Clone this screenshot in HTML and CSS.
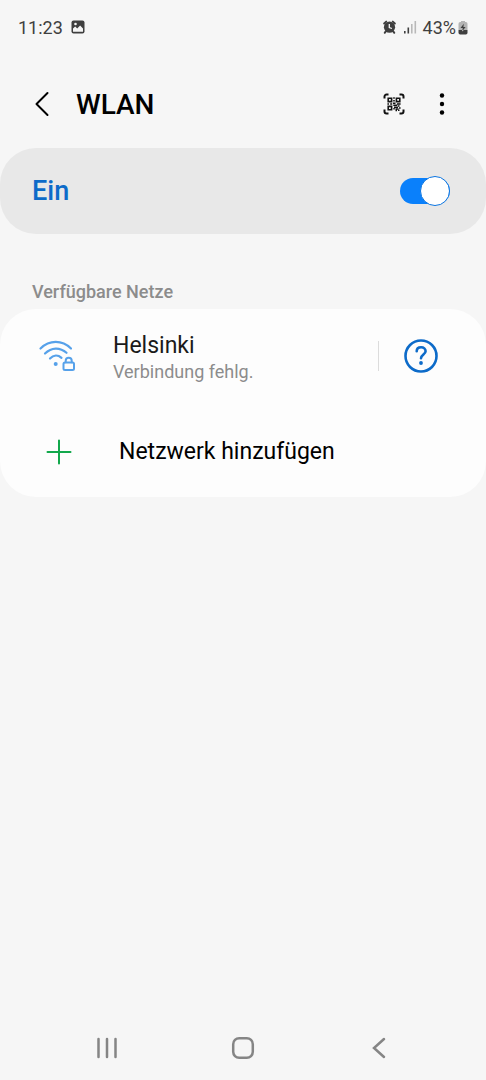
FILE: index.html
```html
<!DOCTYPE html>
<html lang="de">

<head>
    <meta charset="UTF-8">
    <meta name="viewport" content="width=device-width, initial-scale=1.0">
    <title>WLAN</title>
    <link rel="stylesheet" href="styles.css">
</head>

<body>

    <div class="status-bar">
        <div class="status-left">
            <span>11:23</span>
            <svg class="status-picture" width="14" height="14" viewBox="0 0 14 14">
                <rect x="0.5" y="0.5" width="13" height="13" rx="2" fill="#3f3f3f" />
                <path d="M2 11.7V8.6l2.2-2 2 1.8 2.9-3 2.9 3.2v3.1z" fill="#f6f6f6" />
                <circle cx="4.5" cy="4" r="1.3" fill="#f6f6f6" />
            </svg>
        </div>
        <div class="status-right">
            <svg width="13" height="14" viewBox="0 0 13 14">
                <circle cx="6.5" cy="7.2" r="5.6" fill="#3f3f3f" />
                <path d="M1.2 3.5l2-1.9M11.8 3.5l-2-1.9M2.6 11.6l-.8 1.2M10.4 11.6l.8 1.2" fill="none" stroke="#3f3f3f" stroke-width="2" stroke-linecap="round" />
                <path d="M6.3 4v3.5l2.6 1" fill="none" stroke="#f6f6f6" stroke-width="1.3" />
            </svg>
            <svg class="status-signal" width="13" height="14" viewBox="0 0 13 14">
                <rect x="0" y="11" width="1.6" height="2.5" fill="#3f3f3f" />
                <rect x="3.5" y="7.5" width="1.6" height="6" fill="#3f3f3f" />
                <rect x="7" y="4" width="1.6" height="9.5" fill="#b9b9b9" />
                <rect x="10.5" y="1" width="1.6" height="12.5" fill="#b9b9b9" />
            </svg>
            <span>43%</span>
            <svg class="status-battery" width="10" height="15" viewBox="0 0 10 15">
                <path d="M3 1h4v1h.8a1.7 1.7 0 0 1 1.7 1.7V10h-9V3.7A1.7 1.7 0 0 1 2.200 2H3z" fill="#b4b4b4" />
                <path d="M.5 10h9v2.800a1.700 1.700 0 0 1-1.700 1.700H2.200a1.700 1.700 0 0 1-1.700-1.700z" fill="#3f3f3f" />
                <path d="M5.800 3.800L2.500 8h2.300l-.6 3.200L7.600 7H5.400z" fill="#3f3f3f" />
                <path d="M4.400 10h1.200l-1.300 1.500z" fill="#f6f6f6" />
            </svg>
        </div>
    </div>

    <header class="app-bar">
        <button class="icon-button" aria-label="Zurück">
            <svg width="24" height="28" viewBox="0 0 24 28">
                <path d="M17.5 3L6.500 14l11 11" fill="none" stroke="#000" stroke-width="2" stroke-linecap="round" stroke-linejoin="round" />
            </svg>
        </button>
        <h1>WLAN</h1>
        <button class="icon-button" aria-label="QR-Code scannen">
            <svg width="22" height="22" viewBox="0 0 22 22" fill="none" stroke="#111">
                <path d="M1.500 5.500V3.500a2 2 0 0 1 2-2h2M16.500 1.500h2a2 2 0 0 1 2 2v2M20.500 16.500v2a2 2 0 0 1-2 2h-2M5.500 20.500h-2a2 2 0 0 1-2-2v-2" stroke-width="2" />
                <path d="M5.200 5.200h3.400v3.400H5.200zM13.400 5.200h3.400v3.400h-3.400zM5.200 13.400h3.400v3.400H5.200z" stroke-width="1.600" />
                <path d="M10.200 5h1.600M10.200 7.800h1.600M4.400 11h1.600M7.200 11h2M10 10.300h2.500M14 11h3.600M10.300 12.300h4M15 13h1.500M11 14.200h4M16 15h1.600M10.300 15.800h1.500M12.500 16h3M12.500 17.500h1.500M15 17.300h1.500" stroke-width="1.600" />
            </svg>
        </button>
        <button class="icon-button" aria-label="Weitere Optionen">
            <svg width="6" height="22" viewBox="0 0 6 22" fill="#000">
                <circle cx="3" cy="2.500" r="2.200" />
                <circle cx="3" cy="11" r="2.200" />
                <circle cx="3" cy="19.500" r="2.200" />
            </svg>
        </button>
    </header>

    <main>
        <label class="wifi-switch">
            <span>Ein</span>
            <input type="checkbox" role="switch" checked>
        </label>

        <h2>Verfügbare Netze</h2>

        <div class="card">
            <div class="network">
                <button class="row">
                    <svg width="40" height="34" viewBox="0 0 40 34" fill="none" stroke="#56a1ea" stroke-width="2.200" stroke-linecap="round">
                        <path d="M2.500 9.500C11.500 .7 24 .7 33 9.500" />
                        <path d="M7 14.500C13.500 8 22 8 28.500 13.800" />
                        <path d="M12 19.500C15.500 15.800 20 15.800 23.500 18.800" />
                        <circle cx="17.700" cy="25" r="2" fill="#56a1ea" stroke="none" />
                        <rect x="25.500" y="23.500" width="10.500" height="7.500" rx="1.500" stroke-width="2" />
                        <path d="M27.700 23.300v-1.500a3 3 0 0 1 6 0v1.500" stroke-width="2" />
                    </svg>
                    <span class="network-text">
                        <span class="network-name">Helsinki</span>
                        <span class="network-state">Verbindung fehlg.</span>
                    </span>
                </button>
                <button class="help" aria-label="Hilfe">
                    <svg width="34" height="34" viewBox="0 0 34 34" fill="none" stroke="#0d6bc9" stroke-linecap="round">
                        <circle cx="17" cy="17" r="15.500" stroke-width="2.600" />
                        <path d="M12.700 12.300C12.700 9.800 14.500 8.300 17.100 8.300S21.600 10 21.600 12.200C21.600 15.300 17 15.700 17 19.300" stroke-width="2.600" />
                        <circle cx="17" cy="24" r="1.900" fill="#0d6bc9" stroke="none" />
                    </svg>
                </button>
            </div>
            <button class="row add-network">
                <svg width="26" height="26" viewBox="0 0 26 26">
                    <path d="M13 1.500v23M1.500 13h23" stroke="#12a84c" stroke-width="2" stroke-linecap="round" />
                </svg>
                <span>Netzwerk hinzufügen</span>
            </button>
        </div>
    </main>

    <nav class="nav-bar">
        <button aria-label="Letzte Apps">
            <svg width="22" height="22" viewBox="0 0 22 22">
                <path d="M2.500 2v18M11 2v18M19.500 2v18" stroke="#858585" stroke-width="2.500" stroke-linecap="round" />
            </svg>
        </button>
        <button aria-label="Startbildschirm">
            <svg width="24" height="24" viewBox="0 0 24 24">
                <rect x="2.200" y="2.200" width="19.600" height="19.600" rx="6" fill="none" stroke="#858585" stroke-width="2.500" />
            </svg>
        </button>
        <button aria-label="Zurück">
            <svg width="22" height="22" viewBox="0 0 22 22">
                <path d="M16 2L6 11l10 9" fill="none" stroke="#858585" stroke-width="2.500" stroke-linecap="round" />
            </svg>
        </button>
    </nav>

</body>

</html>
```
FILE: styles.css
```css
*,
*::before,
*::after {
    box-sizing: border-box;
}

body {
    margin: 0;
    min-height: 100vh;
    display: flex;
    flex-direction: column;
    background-color: #f6f6f6;
    color: #000;
    font-family: Roboto, sans-serif;
}

svg {
    display: block;
    flex: none;
}

button {
    margin: 0;
    padding: 0;
    border: none;
    background: none;
    color: inherit;
    font: inherit;
    cursor: pointer;
}

.status-bar {
    display: flex;
    justify-content: space-between;
    align-items: center;
    height: 54px;
    padding: 0 18px;
    font-size: 18px;
    color: #3f3f3f;
}

.status-left,
.status-right {
    display: flex;
    align-items: center;
}

.status-picture {
    margin-left: 8px;
}

.status-signal {
    margin: 0 6px 0 8px;
}

.status-battery {
    margin-left: 2px;
}

.app-bar {
    display: flex;
    align-items: center;
    height: 94px;
    padding: 6px 24px 0 22px;
}

.app-bar h1 {
    flex: 1;
    margin: 0 0 0 14px;
    font-size: 28px;
    font-weight: 500;
}

.icon-button {
    display: flex;
    justify-content: center;
    align-items: center;
    width: 40px;
    height: 40px;
}

.icon-button + .icon-button {
    margin-left: 8px;
}

main {
    flex: 1;
}

.wifi-switch {
    display: flex;
    justify-content: space-between;
    align-items: center;
    height: 86px;
    padding: 0 36px 0 32px;
    border-radius: 36px;
    background-color: #e8e8e8;
    color: #0d6bc9;
    font-size: 27px;
    line-height: 30px;
    font-weight: 500;
    cursor: pointer;
}

.wifi-switch input {
    appearance: none;
    display: flex;
    justify-content: flex-end;
    align-items: center;
    width: 50px;
    height: 26px;
    margin: 0;
    border-radius: 13px;
    background-color: #0a80fb;
    cursor: pointer;
}

.wifi-switch input::before {
    content: "";
    flex: none;
    width: 30px;
    height: 30px;
    border: 1px solid #0a74e0;
    border-radius: 50%;
    background-color: #fff;
}

h2 {
    margin: 47px 32px 7px;
    font-size: 18px;
    line-height: 21px;
    font-weight: 500;
    color: #8c8c8c;
}

.card {
    border-radius: 36px;
    background-color: #fdfdfd;
}

.network {
    display: flex;
    align-items: center;
}

.row {
    flex: 1;
    display: flex;
    align-items: center;
    height: 94px;
    padding-left: 38px;
    text-align: left;
}

.network-text {
    display: flex;
    flex-direction: column;
    margin-left: 35px;
    padding-top: 4px;
}

.network-name {
    font-size: 23px;
    line-height: 28px;
    color: #1a1a1a;
}

.network-state {
    font-size: 18px;
    line-height: 24px;
    color: #8c8c8c;
}

.help {
    padding: 0 48px 0 25px;
    border-left: 1px solid #dcdcdc;
}

.help svg {
    margin: -2px 0;
}

.add-network {
    width: 100%;
    padding: 3px 0 0 46px;
    font-size: 23px;
}

.add-network span {
    margin-left: 47px;
}

.nav-bar {
    display: flex;
    height: 64px;
    padding: 0 8%;
}

.nav-bar button {
    flex: 1;
    display: flex;
    justify-content: center;
    align-items: center;
}
```
